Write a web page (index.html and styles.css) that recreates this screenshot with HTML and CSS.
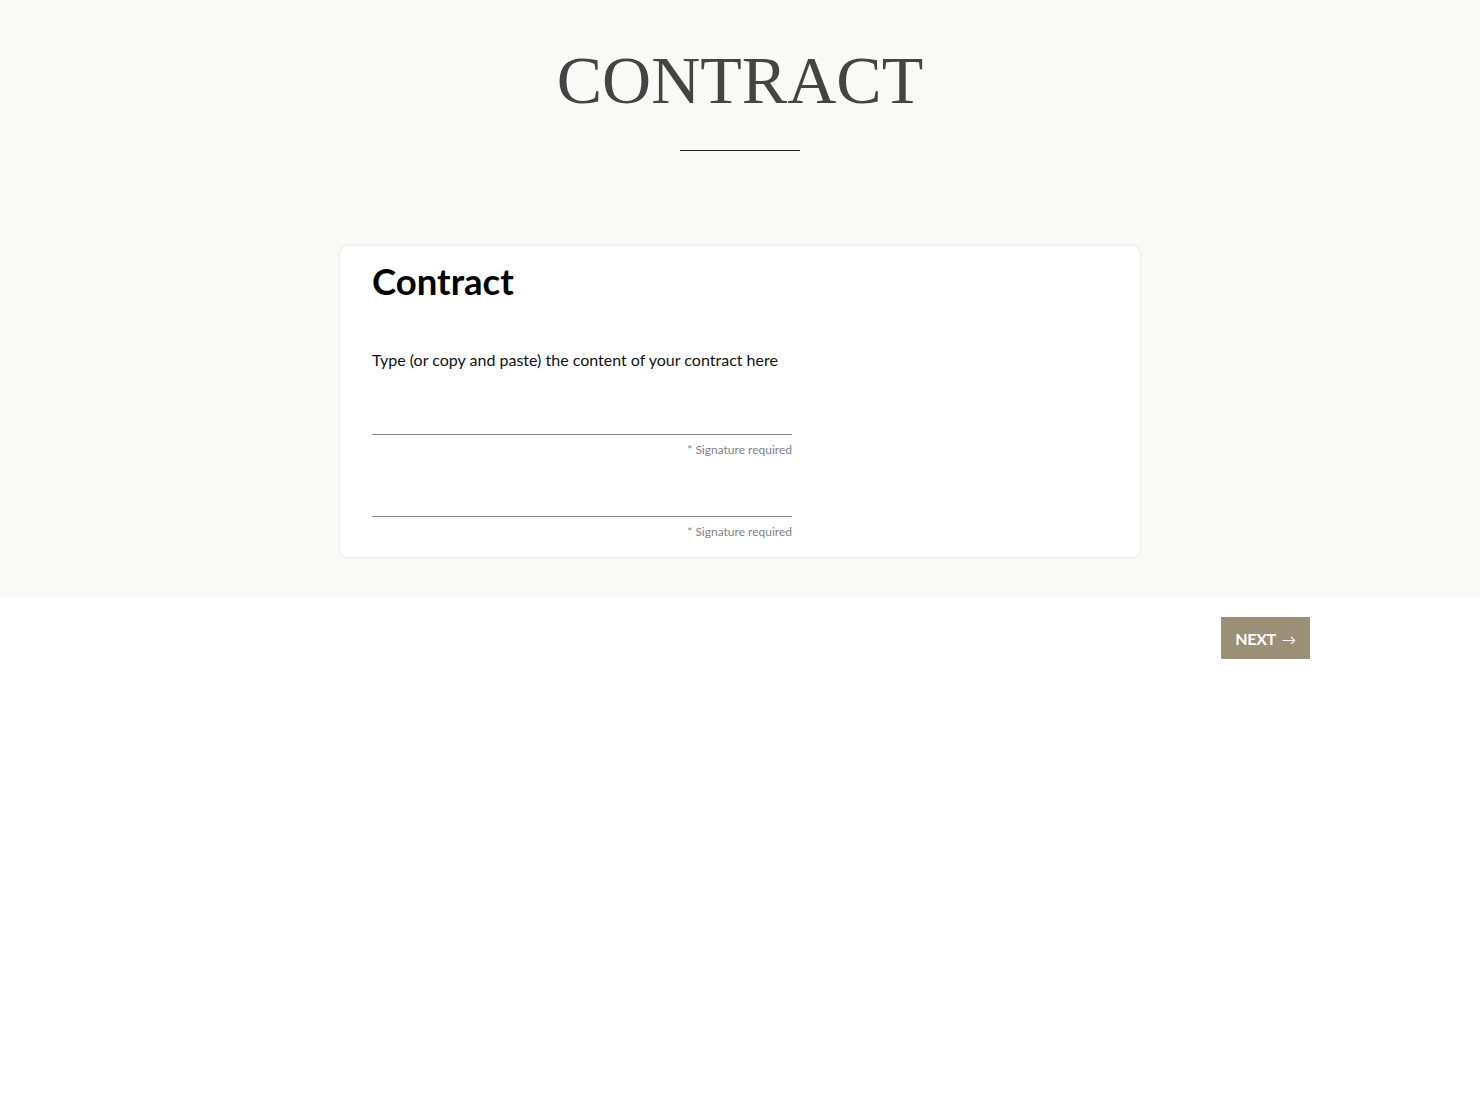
FILE: index.html
```html
<!DOCTYPE html>
<html>
<head>
<meta charset="utf-8">
<link rel="stylesheet" href="styles.css">
</head>
<body>
<section class="hero">
  <h1 class="page-title">CONTRACT</h1>
  <div class="title-rule"></div>
  <div class="card">
    <h2 class="card-title">Contract</h2>
    <p class="card-text">Type (or copy and paste) the content of your contract here</p>
    <div class="sig sig-first">
      <div class="sig-line"></div>
      <div class="sig-label">* Signature required</div>
    </div>
    <div class="sig sig-second">
      <div class="sig-line"></div>
      <div class="sig-label">* Signature required</div>
    </div>
  </div>
</section>
<div class="actions">
  <button class="next-btn">NEXT <span class="arrow">→</span></button>
</div>
</body>
</html>
```

FILE: styles.css
```css
* { box-sizing: border-box; }
html, body { margin: 0; padding: 0; background: #ffffff; }
body { font-family: Lato, "Liberation Sans", sans-serif; color: #111; }

.hero {
  background: #f9f9f7;
  display: flex;
  flex-direction: column;
  align-items: center;
  padding: 40px 0 40px;
}
.page-title {
  margin: 0;
  font-family: "Liberation Serif", serif;
  font-weight: 400;
  font-size: 68px;
  line-height: 80px;
  color: #444;
}
.title-rule {
  width: 120px;
  height: 1px;
  background: #222;
  margin-top: 30px;
  margin-bottom: 95px;
}
.card {
  width: 800px;
  background: #fff;
  border-radius: 8px;
  box-shadow: 0 0 3px rgba(0,0,0,0.12);
  padding: 15px 32px 18px;
}
.card-title {
  margin: 0;
  font-size: 36.5px;
  font-weight: 700;
  line-height: 40px;
  color: #000;
}
.card-text {
  margin: 49px 0 0;
  font-size: 16px;
  line-height: 20px;
  color: #111;
}
.sig {
  width: 420px;
  display: flex;
  flex-direction: column;
  align-items: flex-end;
}
.sig-line {
  width: 100%;
  height: 1px;
  background: #888;
}
.sig-first .sig-line { margin-top: 64px; }
.sig-second .sig-line { margin-top: 59px; }
.sig-label {
  margin-top: 8px;
  font-size: 12px;
  line-height: 14px;
  color: #80808a;
}
.actions {
  display: flex;
  justify-content: flex-end;
  padding: 20px 170px 0 0;
}
.next-btn {
  background: #9a8f77;
  color: #fff;
  border: none;
  height: 42px;
  width: 89px;
  padding: 0;
  font-family: Lato, "Liberation Sans", sans-serif;
  font-size: 16px;
  font-weight: 700;
  letter-spacing: -0.3px;
}
.arrow { font-weight: 400; font-size: 14px; margin-left: 3px; }
```
